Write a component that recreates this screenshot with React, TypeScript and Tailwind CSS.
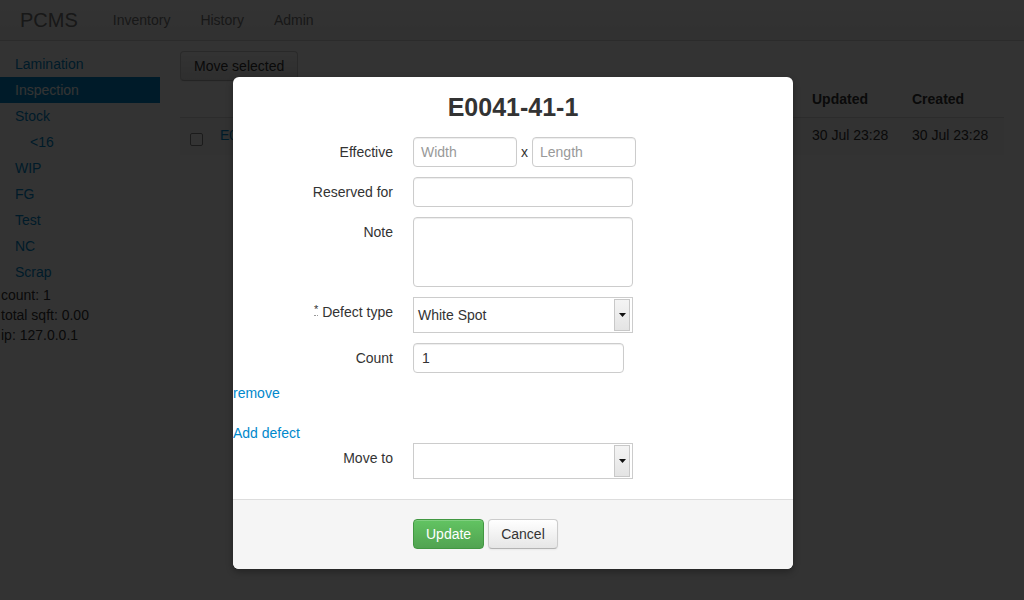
const sideLinks = [
  { label: "Lamination" },
  { label: "Inspection", active: true },
  { label: "Stock" },
  { label: "<16", indent: true },
  { label: "WIP" },
  { label: "FG" },
  { label: "Test" },
  { label: "NC" },
  { label: "Scrap" },
];

function Navbar() {
  return (
    <div className="h-[41px] border-b border-[#d4d4d4] bg-linear-to-b from-white to-[#f2f2f2] flex items-center">
      <span className="pl-[20px] pr-[20px] text-[20px] leading-[20px] text-[#777]">PCMS</span>
      {["Inventory", "History", "Admin"].map((n) => (
        <span key={n} className="px-[15px] text-[#777]">
          {n}
        </span>
      ))}
    </div>
  );
}

function Sidebar() {
  return (
    <div className="w-[160px] shrink-0">
      {sideLinks.map((l) => (
        <div
          key={l.label}
          className={
            "py-[3px] " +
            (l.indent ? "pl-[30px] " : "pl-[15px] ") +
            (l.active ? "bg-[#0088cc] text-white" : "text-[#0088cc]")
          }
        >
          {l.label}
        </div>
      ))}
      <div className="pl-[1px]">
        <div>count: 1</div>
        <div>total sqft: 0.00</div>
        <div>ip: 127.0.0.1</div>
      </div>
    </div>
  );
}

function Main() {
  return (
    <div className="ml-[20px] w-[824px]">
      <button className="h-[30px] px-[13px] border border-[#ccc] border-b-[#b3b3b3] rounded-[4px] bg-linear-to-b from-white to-[#e6e6e6] text-[#333] shadow-[inset_0_1px_0_rgba(255,255,255,0.2),0_1px_2px_rgba(0,0,0,0.05)]">
        Move selected
      </button>
      <div>
        <div className="flex font-bold h-[36px] items-center">
          <div className="w-[624px]" />
          <div className="w-[100px] px-[8px]">Updated</div>
          <div className="w-[100px] px-[8px]">Created</div>
        </div>
        <div className="flex h-[38px] pt-[7px] border-t border-[#ddd] bg-[#f9f9f9]">
          <div className="w-[32px] pl-[10px] pt-[8px]">
            <div className="w-[13px] h-[13px] border border-[#888] rounded-[2px] bg-white" />
          </div>
          <div className="w-[100px] px-[8px] text-[#0088cc]">E0041-41-1</div>
          <div className="w-[200px] px-[8px]">Laminated sheet</div>
          <div className="w-[100px] px-[8px]">0x0</div>
          <div className="w-[192px] px-[8px]" />
          <div className="w-[100px] px-[8px]">30 Jul 23:28</div>
          <div className="w-[100px] px-[8px]">30 Jul 23:28</div>
        </div>
      </div>
    </div>
  );
}

const inputCls =
  "h-[30px] border border-[#ccc] rounded-[4px] bg-white px-[7px] flex items-center shadow-[inset_0_1px_1px_rgba(0,0,0,0.075)]";

function FakeSelect({ value }: { value?: string }) {
  return (
    <div className="w-[220px] h-[36px] border border-[#ccc] bg-white flex items-center pl-[4px] pr-[2px]">
      <span className="flex-1">{value}</span>
      <div className="w-[16px] h-[32px] border border-[#c8c8c8] bg-linear-to-b from-[#f4f4f4] to-[#e4e4e4] flex items-center justify-center">
        <svg width="7" height="4" viewBox="0 0 7 4">
          <path d="M0 0h7L3.5 4z" fill="#111" />
        </svg>
      </div>
    </div>
  );
}

function Row({ label, children, cls }: { label: React.ReactNode; children: React.ReactNode; cls?: string }) {
  return (
    <div className={"flex " + (cls ?? "mb-[10px]")}>
      <div className="w-[160px] text-right pt-[5px]">{label}</div>
      <div className="ml-[20px]">{children}</div>
    </div>
  );
}

function Modal() {
  return (
    <div className="absolute left-[233px] top-[77px] w-[560px] bg-white rounded-[6px] shadow-[0_3px_7px_rgba(0,0,0,0.3)]">
      <div className="h-[60px] pt-[15px] text-center text-[25px] leading-[30px] font-bold">E0041-41-1</div>
      <div>
        <Row label="Effective">
          <div className="flex items-center">
            <div className={inputCls + " w-[104px] text-[#999]"}>Width</div>
            <span className="mx-[4px] w-[7px]">x</span>
            <div className={inputCls + " w-[104px] text-[#999]"}>Length</div>
          </div>
        </Row>
        <Row label="Reserved for">
          <div className={inputCls + " w-[220px]"} />
        </Row>
        <Row label="Note">
          <div className="w-[220px] h-[70px] border border-[#ccc] rounded-[4px] bg-white shadow-[inset_0_1px_1px_rgba(0,0,0,0.075)]" />
        </Row>
        <Row
          label={
            <>
              <span className="border-b border-dotted border-[#999] text-[11px] align-top leading-[14px]">*</span> Defect type
            </>
          }
        >
          <FakeSelect value="White Spot" />
        </Row>
        <Row label="Count">
          <div className={inputCls + " w-[211px] pl-[8px]"}>1</div>
        </Row>
        <div className="text-[#0088cc] mb-[20px]">remove</div>
        <div className="text-[#0088cc]">Add defect</div>
        <Row label="Move to" cls="mb-[20px]">
          <FakeSelect />
        </Row>
      </div>
      <div className="border-t border-[#ddd] bg-[#f5f5f5] rounded-b-[6px] pt-[19px] pb-[20px] pl-[180px] flex gap-[4px]">
        <button className="h-[30px] px-[12px] rounded-[4px] border border-[#429742] bg-linear-to-b from-[#62c462] to-[#51a351] text-white shadow-[inset_0_1px_0_rgba(255,255,255,0.2)]">
          Update
        </button>
        <button className="h-[30px] px-[12px] rounded-[4px] border border-[#ccc] border-b-[#b3b3b3] bg-linear-to-b from-white to-[#e6e6e6] text-[#333] shadow-[0_1px_2px_rgba(0,0,0,0.05)]">
          Cancel
        </button>
      </div>
    </div>
  );
}

export default function App() {
  return (
    <div className="relative w-[1024px] h-[600px] overflow-hidden bg-white text-[14px] leading-5 text-[#333] font-['Liberation_Sans',Arial,sans-serif]">
      <Navbar />
      <div className="flex pt-[10px]">
        <Sidebar />
        <Main />
      </div>
      <div className="absolute inset-0 bg-black/80" />
      <Modal />
    </div>
  );
}
